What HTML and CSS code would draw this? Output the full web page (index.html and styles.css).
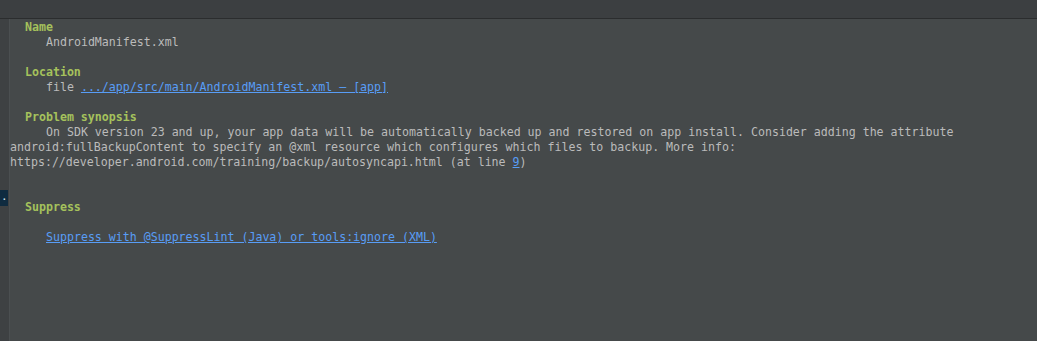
FILE: index.html
```html
<!DOCTYPE html>
<html>
    <head>
        <meta charset='utf-8'/>
        <title>Lint inspection</title>
        <link rel="stylesheet" href="styles.css">
    </head>
    <body>
        <div class='topbar'></div>
        <div class='frame'>
            <div class='gutter'>
                <div class='tab'>.</div>
            </div>
            <div class='pane'>
                <div class='head'>Name</div>
                <div class='val'>AndroidManifest.xml</div>
                <div class='blank'></div>
                <div class='head'>Location</div>
                <div class='val'>file <a class='link' href='#'>.../app/src/main/AndroidManifest.xml – [app]</a></div>
                <div class='blank'></div>
                <div class='head'>Problem synopsis</div>
                <div class='para'>On SDK version 23 and up, your app data will be automatically backed up and restored on app install. Consider adding the attribute android:fullBackupContent to specify an @xml resource which configures which files to backup. More info: https://developer.android.com/training/backup/autosyncapi.html (at line <a class='link' href='#'>9</a>)</div>
                <div class='blank'></div>
                <div class='blank'></div>
                <div class='head'>Suppress</div>
                <div class='blank'></div>
                <div class='val'><a class='link' href='#'>Suppress with @SuppressLint (Java) or tools:ignore (XML)</a></div>
            </div>
        </div>
    </body>
</html>
```
FILE: styles.css
```css
html,body{margin:0;padding:0;height:100%;}
body{background-color:#45494a;font-family:'DejaVu Sans Mono','Liberation Mono',monospace;font-size:11.6px;line-height:15px;color:#bbbbbb;display:flex;flex-direction:column;}
.topbar{height:18px;background-color:#3c3f41;border-bottom:1px solid #2b2d2e;flex:none;}
.frame{flex:1;display:flex;}
.gutter{width:9px;background-color:#3e4143;border-right:1px solid #4b4f51;flex:none;padding-top:171px;box-sizing:content-box;}
.tab{width:8px;height:16px;background-color:#0f2b40;color:#d8e2ea;font-size:11px;line-height:14px;text-indent:1px;overflow:hidden;}
.pane{flex:1;padding-top:1px;}
.head{padding-left:15px;color:#a5c25c;font-weight:bold;}
.val{padding-left:36px;white-space:nowrap;}
.para{text-indent:36px;width:980px;}
.blank{height:15px;}
.link{color:#589df6;text-decoration:underline;}
```
